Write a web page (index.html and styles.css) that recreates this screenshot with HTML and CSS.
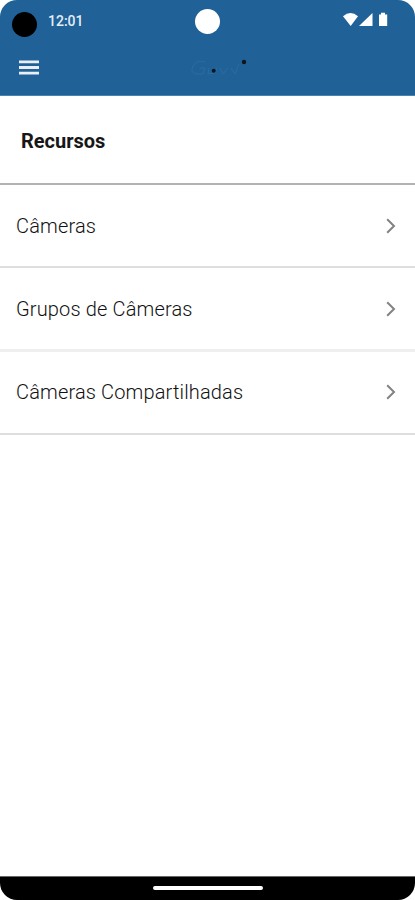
FILE: index.html
```html
<!DOCTYPE html>
<html lang="pt-BR">
<head>
<meta charset="utf-8">
<title>Recursos</title>
<link rel="stylesheet" href="styles.css">
</head>
<body>
<div class="phone">
  <header class="top">
    <div class="status">
      <span class="lens"></span>
      <span class="time">12:01</span>
      <span class="cutout"></span>
      <svg class="signals" width="46" height="16" viewBox="0 0 46 16" fill="#fff">
        <path d="M0 4.300Q7.500-2.500 15 4.300L7.700 14z"/>
        <path d="M29.500 1v13H16z"/>
        <path d="M36 2.500h2V.8h4v1.700h2.200V14H36z"/>
      </svg>
    </div>
    <div class="appbar">
      <svg class="menu" width="20" height="16" viewBox="0 0 20 16" fill="#e9eef8"><path d="M0 .5h20v2.800H0zM0 6.100h20v2.800H0zM0 11.700h20v2.800H0z"/></svg>
      <svg class="logo" width="60" height="24" viewBox="0 0 60 24">
        <path d="M17 6Q9 3 5 10T10 18H15L17 12H12M21 12L20 18L27 17L29 12M32 12L35 18L40 12M43 12L47 18L51 8" fill="none" stroke="#2b6da3" stroke-width="1"/>
        <circle cx="25.700" cy="14.700" r="2" fill="#07151d"/>
        <circle cx="56" cy="6" r="2.200" fill="#10151b"/>
      </svg>
    </div>
  </header>
  <h1 class="title">Recursos</h1>
  <main class="list">
    <a class="row"><span class="label">Câmeras</span><svg class="chev" width="10" height="16" viewBox="0 0 10 16"><path d="M1.200 1.200L8 8L1.200 14.800"/></svg></a>
    <a class="row pale"><span class="label">Grupos de Câmeras</span><svg class="chev" width="10" height="16" viewBox="0 0 10 16"><path d="M1.200 1.200L8 8L1.200 14.800"/></svg></a>
    <a class="row last"><span class="label">Câmeras Compartilhadas</span><svg class="chev" width="10" height="16" viewBox="0 0 10 16"><path d="M1.200 1.200L8 8L1.200 14.800"/></svg></a>
  </main>
  <footer class="nav"><span class="handle"></span></footer>
</div>
</body>
</html>
```
FILE: styles.css
```css
* { box-sizing: border-box; }
body { margin: 0; background: #fff; font-family: Roboto, sans-serif; }
.phone { width: 415px; height: 900px; display: flex; flex-direction: column; background: #fff; border-radius: 17px; overflow: hidden; }
.top { height: 96px; background: #206297; border-bottom: 1px solid #4a83b0; }
.status { height: 46px; display: flex; align-items: flex-start; padding-left: 12px; }
.lens, .cutout { width: 25px; height: 25px; border-radius: 50%; background: #000; margin-top: 12px; }
.time { width: 147px; padding-left: 11px; margin-top: 12px; font-size: 14px; line-height: 18px; font-weight: 500; color: #e4edf8; }
.cutout { background: #fff; margin-top: 9px; margin-left: 11px; }
.signals { margin: 12px 0 0 123px; }
.appbar { height: 49px; display: flex; align-items: flex-start; padding-left: 19px; }
.menu { margin-top: 14px; }
.logo { margin: 10px 0 0 149px; }
.title { height: 89px; margin: 0; padding: 33px 21px 0; font-size: 20px; line-height: 24px; font-weight: 700; color: #171717; border-bottom: 2px solid #b3b1b3; }
.row { height: 83px; display: flex; align-items: center; justify-content: space-between; padding: 0 19px 0 16px; border-bottom: 2px solid #dedede; }
.pale { height: 84px; border-bottom: 3px solid #eee; }
.last { padding-bottom: 2px; }
.label { font-size: 20px; line-height: 24px; font-weight: 300; letter-spacing: .15px; color: #111; white-space: nowrap; }
.chev { fill: none; stroke: #828282; stroke-width: 2; }
.nav { height: 24px; margin-top: auto; background: #000; border-top: 1px solid #666; display: flex; justify-content: center; padding-top: 9px; }
.handle { width: 110px; height: 4px; border-radius: 2px; background: #fff; }
```
